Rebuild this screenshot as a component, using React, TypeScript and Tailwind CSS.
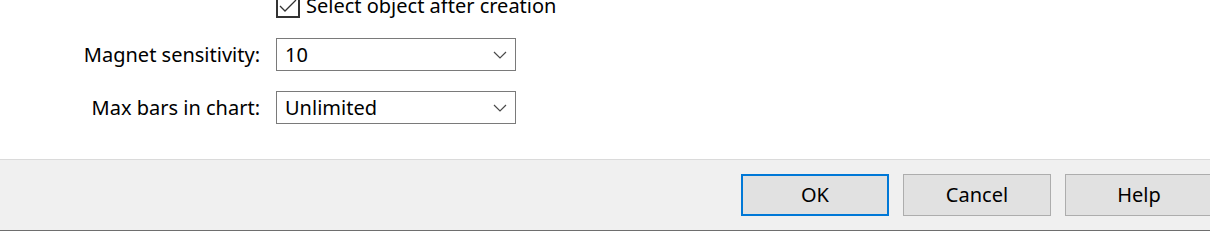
const font = { fontFamily: '"Noto Sans", "Open Sans", sans-serif' };

const Chevron = () => (
  <svg width="14" height="8" viewBox="0 0 14 8" className="shrink-0">
    <path d="M1 1 L7 7 L13 1" fill="none" stroke="#4a4a4a" strokeWidth="1.2" />
  </svg>
);

const Select = ({ value }: { value: string }) => (
  <div className="flex h-[33px] w-[240px] items-center justify-between border border-[#7a7a7a] bg-white pl-[8px] pr-[8px]">
    <span className="text-[20px] leading-none text-black">{value}</span>
    <Chevron />
  </div>
);

const Button = ({ label, primary }: { label: string; primary?: boolean }) => (
  <button
    className={`flex h-[42px] w-[148px] shrink-0 items-center justify-center bg-[#e1e1e1] text-[20px] text-black ${
      primary ? "border-2 border-[#0078d7]" : "border border-[#adadad]"
    }`}
  >
    {label}
  </button>
);

export default function App() {
  return (
    <div className="h-[242px] w-[1210px] overflow-hidden bg-white" style={font}>
      {/* Form */}
      <div className="grid h-[159px] grid-cols-[260px_240px] content-start gap-x-[16px] gap-y-[20px]">
        <div />
        <label className="-mt-[6px] flex h-[24px] items-center gap-[6px] text-[20px] text-black">
          <span className="flex h-[24px] w-[24px] shrink-0 items-center justify-center border-2 border-[#333333] bg-white">
            <svg width="18" height="14" viewBox="0 0 18 14">
              <path d="M1 7 L6 12 L17 1" fill="none" stroke="#333333" strokeWidth="1.3" />
            </svg>
          </span>
          <span className="whitespace-nowrap leading-none">Select object after creation</span>
        </label>

        <span className="flex items-center justify-end text-[20px] text-black">Magnet sensitivity:</span>
        <Select value="10" />

        <span className="flex items-center justify-end text-[20px] text-black">Max bars in chart:</span>
        <Select value="Unlimited" />
      </div>

      {/* Footer */}
      <div className="flex h-[72px] items-start justify-end gap-[14px] border-t border-b border-t-[#dadada] border-b-[#6e6e6e] bg-[#f0f0f0] pt-[14px] pr-0">
        <Button label="OK" primary />
        <Button label="Cancel" />
        <div className="-mr-[3px]">
          <Button label="Help" />
        </div>
      </div>
    </div>
  );
}
